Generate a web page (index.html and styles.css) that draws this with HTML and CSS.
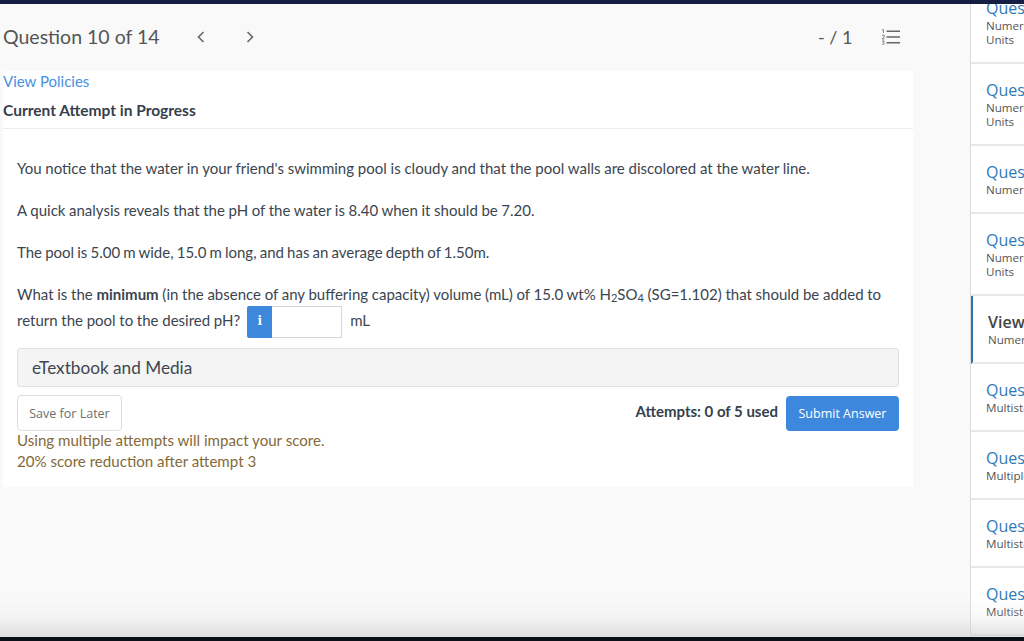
FILE: index.html
```html
<!DOCTYPE html>
<html lang="en">
<head>
<meta charset="utf-8">
<title>Question 10 of 14</title>
<link rel="stylesheet" href="styles.css">
</head>
<body>
<div class="topbar"></div>
<div class="app">
  <main class="main">
    <header class="qhead">
      <h1 class="qtitle">Question 10 of 14</h1>
      <nav class="qnav">
        <svg class="chev" width="10" height="14" viewBox="0 0 10 14"><path d="M7.5 2 L2.5 7 L7.5 12" fill="none" stroke="#666" stroke-width="1.6"/></svg>
        <svg class="chev" width="10" height="14" viewBox="0 0 10 14"><path d="M2.5 2 L7.5 7 L2.5 12" fill="none" stroke="#666" stroke-width="1.6"/></svg>
      </nav>
      <div class="score">- / 1</div>
      <svg class="listicon" width="20" height="16" viewBox="0 0 20 16">
        <g fill="none" stroke="#666" stroke-width="1.6"><path d="M5.5 2.2H19M5.5 8H19M5.5 13.8H19"/></g>
        <g fill="none" stroke="#777" stroke-width=".9"><path d="M1 1 L2.4 .6V4M1 6.2H3.2V8L1 10H3.4M1 12H3.3L2 13.6C3.8 13.6 3.8 15.6 1 15.3"/></g>
      </svg>
    </header>
    <section class="card">
      <div class="cardhead">
        <a class="policies">View Policies</a>
        <div class="attempt">Current Attempt in Progress</div>
      </div>
      <div class="body">
        <p class="para">You notice that the water in your friend's swimming pool is cloudy and that the pool walls are discolored at the water line.</p>
        <p class="para snug">A quick analysis reveals that the pH of the water is 8.40 when it should be 7.20.</p>
        <p class="para tight">The pool is 5.00 m wide, 15.0 m long, and has an average depth of 1.50m.</p>
        <div class="question">What is the <b>minimum</b> (in the absence of any buffering capacity) volume (mL) of 15.0 wt% H<sub>2</sub>SO<sub>4</sub> (SG=1.102) that should be added to<br>return the pool to the desired pH?<span class="answer"><span class="info">i</span><span class="field"></span></span><span class="unit">mL</span></div>
        <div class="media">eTextbook and Media</div>
        <div class="actions">
          <button class="save">Save for Later</button>
          <div class="right">
            <span class="used">Attempts: 0 of 5 used</span>
            <button class="submit">Submit Answer</button>
          </div>
        </div>
        <p class="warn">Using multiple attempts will impact your score.<br>20% score reduction after attempt 3</p>
      </div>
    </section>
  </main>
  <aside class="side">
    <div class="list">
      <div class="item two"><div class="q">Question 9</div><div class="s">Numeric</div><div class="s">Units</div></div>
      <div class="item two"><div class="q">Question 10</div><div class="s">Numeric</div><div class="s">Units</div></div>
      <div class="item one"><div class="q">Question 11</div><div class="s">Numeric</div></div>
      <div class="item two"><div class="q">Question 12</div><div class="s">Numeric</div><div class="s">Units</div></div>
      <div class="item one active"><div class="q">Viewing</div><div class="s">Numeric</div></div>
      <div class="item one"><div class="q">Question 14</div><div class="s">Multistep</div></div>
      <div class="item one"><div class="q">Question 15</div><div class="s">Multiple</div></div>
      <div class="item one"><div class="q">Question 16</div><div class="s">Multistep</div></div>
      <div class="item one"><div class="q">Question 17</div><div class="s">Multistep</div></div>
    </div>
  </aside>
</div>
<div class="shade"></div>
<div class="bottombar"></div>
</body>
</html>
```
FILE: styles.css
```css
* { box-sizing: border-box; }
html, body { margin: 0; height: 100%; overflow: hidden; }
body {
  position: relative;
  display: flex;
  flex-direction: column;
  background: #f9f9f9;
  font-family: Lato, "Liberation Sans", sans-serif;
  color: #3b4550;
}
.topbar { height: 4px; flex: none; background: #141e42; }
.bottombar { height: 4px; flex: none; background: #0a0f18; }
.app { flex: 1; display: flex; min-height: 0; }
.main { width: 970px; flex: none; padding-left: 3px; }
.qhead { height: 67px; width: 910px; display: flex; align-items: center; padding-bottom: 2px; color: #555; }
.qtitle { margin: 0; font-size: 19.5px; font-weight: 400; line-height: 1; width: 193px; color: #555; }
.qnav { display: flex; gap: 39px; align-items: center; }
.score { margin-left: 563px; font-size: 18px; color: #555; width: 63px; }
.listicon { flex: none; }
.card { width: 910px; height: 416px; background: #fff; }
.cardhead { height: 58px; border-bottom: 1px solid #ececec; padding-top: 2px; }
.policies { display: block; font-size: 15px; line-height: 17px; color: #4a90e2; }
.attempt { margin-top: 11px; font-size: 15.5px; line-height: 18px; font-weight: 700; color: #36404c; }
.body { padding: 30px 14px 0; font-size: 15px; color: #3b4550; }
.para { margin: 0 0 24px; line-height: 18px; word-spacing: -.05px; }
.snug { word-spacing: -.22px; }
.tight { word-spacing: -.7px; }
.question { line-height: 26px; margin-top: -4px; word-spacing: -.14px; }
.question sub { font-size: 11px; line-height: 0; vertical-align: -2px; }
.answer { display: inline-flex; vertical-align: middle; height: 32px; margin-left: 7px; margin-top: -1px; }
.info { width: 25px; background: #3d88dd; color: #fff; border-radius: 2px 0 0 2px; font-family: "DejaVu Serif", serif; font-weight: 700; font-size: 12px; line-height: 31px; text-align: center; }
.field { width: 70px; border: 1px solid #d5d5d5; border-left: 0; background: #fff; }
.unit { margin-left: 8px; }
.media { margin-top: 10px; height: 39px; background: #f4f4f4; border: 1px solid #e2e2e2; border-radius: 3px; padding-left: 14px; font-size: 17.2px; line-height: 37px; color: #3f4750; }
.actions { margin-top: 8px; height: 36px; display: flex; justify-content: space-between; }
.save { width: 105px; height: 36px; border: 1px solid #dedede; border-radius: 4px; background: #fff; font-family: "Open Sans", sans-serif; font-size: 12.5px; color: #6e6e6e; padding: 0; }
.right { display: flex; gap: 8px; align-items: flex-start; padding-top: 1px; }
.used { font-size: 15px; font-weight: 700; line-height: 31px; color: #36404c; }
.submit { width: 113px; height: 35px; border: 0; border-radius: 4px; background: #3d88dd; font-family: "Open Sans", sans-serif; font-size: 12.5px; color: #fff; padding: 0; }
.warn { margin: -1px 0 0; font-size: 15.1px; line-height: 21px; color: #84693a; }
.side { width: 54px; flex: none; overflow: hidden; border-left: 1px solid #dcdcdc; background: #fff; font-family: "Open Sans", sans-serif; white-space: nowrap; }
.list { margin-top: -22px; }
.item { border-bottom: 2px solid #e8e8e8; padding-left: 15px; overflow: hidden; }
.two { height: 82px; }
.one { height: 68px; }
.q { margin-top: 15px; font-size: 16px; line-height: 22px; color: #2f7ab8; }
.s { font-size: 11.6px; line-height: 14px; color: #555; }
.active { border-left: 2px solid #2d74ad; padding-left: 15px; }
.active .q { color: #444; font-weight: 600; }
.shade { position: absolute; left: 0; right: 0; bottom: 4px; height: 40px; background: linear-gradient(to bottom, rgba(205,205,205,0), rgba(205,205,205,.12) 50%, rgba(205,205,205,.6)); pointer-events: none; }
```
